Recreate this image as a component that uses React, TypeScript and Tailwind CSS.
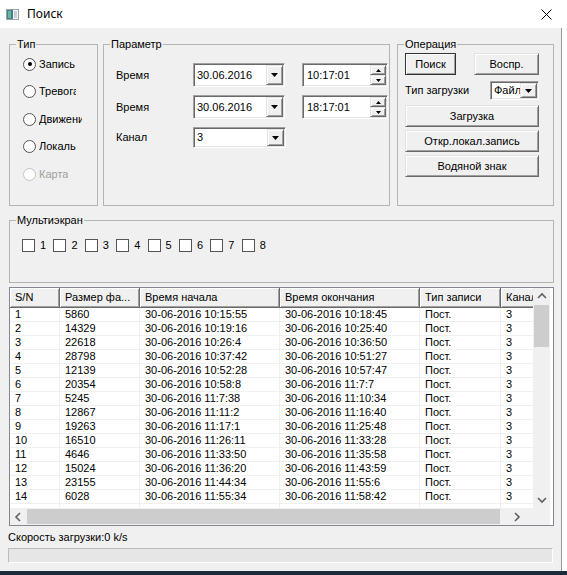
import React from 'react';

const sunken =
  'border border-[#a0a0a0] border-b-white border-r-white shadow-[inset_1px_1px_0_#696969,inset_-1px_-1px_0_#e3e3e3] bg-white';
const raised =
  'border border-[#e3e3e3] border-b-[#696969] border-r-[#696969] shadow-[inset_1px_1px_0_#fff,inset_-1px_-1px_0_#a0a0a0] bg-[#f0f0f0]';

const rows: [string, string, string, string][] = [
  ['1', '5860', '30-06-2016 10:15:55', '30-06-2016 10:18:45'],
  ['2', '14329', '30-06-2016 10:19:16', '30-06-2016 10:25:40'],
  ['3', '22618', '30-06-2016 10:26:4', '30-06-2016 10:36:50'],
  ['4', '28798', '30-06-2016 10:37:42', '30-06-2016 10:51:27'],
  ['5', '12139', '30-06-2016 10:52:28', '30-06-2016 10:57:47'],
  ['6', '20354', '30-06-2016 10:58:8', '30-06-2016 11:7:7'],
  ['7', '5245', '30-06-2016 11:7:38', '30-06-2016 11:10:34'],
  ['8', '12867', '30-06-2016 11:11:2', '30-06-2016 11:16:40'],
  ['9', '19263', '30-06-2016 11:17:1', '30-06-2016 11:25:48'],
  ['10', '16510', '30-06-2016 11:26:11', '30-06-2016 11:33:28'],
  ['11', '4646', '30-06-2016 11:33:50', '30-06-2016 11:35:58'],
  ['12', '15024', '30-06-2016 11:36:20', '30-06-2016 11:43:59'],
  ['13', '23155', '30-06-2016 11:44:34', '30-06-2016 11:55:6'],
  ['14', '6028', '30-06-2016 11:55:34', '30-06-2016 11:58:42'],
];

const colW = ['w-[50px]', 'w-[80px]', 'w-[140px]', 'w-[140px]', 'w-[81px]', 'w-[60px]'];
const headers = ['S/N', 'Размер фа...', 'Время начала', 'Время окончания', 'Тип записи', 'Канал'];

const DownArrow = () => (
  <svg width="7" height="4" viewBox="0 0 7 4">
    <path d="M0 0h7L3.5 4z" fill="#000" />
  </svg>
);

const Group = ({
  title,
  className,
  children,
}: {
  title: string;
  className: string;
  children?: React.ReactNode;
}) => (
  <fieldset className={`border border-[#b4b4b4] min-w-0 ${className}`}>
    <legend className="ml-[6px] px-[1px] leading-[13px]">{title}</legend>
    {children}
  </fieldset>
);

const Combo = ({ value, className }: { value: string; className: string }) => (
  <div className={`${sunken} p-[1px] flex ${className}`}>
    <div className="flex-1 pl-[2px] flex items-center overflow-hidden whitespace-nowrap">{value}</div>
    <div className={`${raised} w-[17px] flex items-center justify-center`}>
      <DownArrow />
    </div>
  </div>
);

const TimeBox = ({ value }: { value: string }) => (
  <div className={`${sunken} p-[1px] flex w-[86px] h-[24px]`}>
    <div className="flex-1 pl-[3px] flex items-center">{value}</div>
    <div className="w-[16px] flex flex-col">
      <div className={`${raised} flex-1 flex items-center justify-center`}>
        <svg width="5" height="3" viewBox="0 0 5 3">
          <path d="M0 3h5L2.5 0z" fill="#000" />
        </svg>
      </div>
      <div className={`${raised} flex-1 flex items-center justify-center`}>
        <svg width="5" height="3" viewBox="0 0 5 3">
          <path d="M0 0h5L2.5 3z" fill="#000" />
        </svg>
      </div>
    </div>
  </div>
);

const Btn = ({ label, className }: { label: string; className: string }) => (
  <div className={`${raised} h-[22px] flex items-center justify-center ${className}`}>{label}</div>
);

const Radio = ({
  label,
  checked,
  disabled,
  clip,
}: {
  label: string;
  checked?: boolean;
  disabled?: boolean;
  clip?: string;
}) => (
  <div className="flex items-center gap-[3px] h-[14px]">
    <div
      className={`w-[13px] h-[13px] rounded-full border bg-white flex items-center justify-center ${
        disabled ? 'border-[#c4c4c4]' : 'border-[#555]'
      }`}
    >
      {checked && <div className="w-[4px] h-[4px] rounded-full bg-black" />}
    </div>
    <span className={`whitespace-nowrap overflow-hidden ${clip ?? ''} ${disabled ? 'text-[#a0a0a0]' : ''}`}>
      {label}
    </span>
  </div>
);

const Chevron = ({ dir }: { dir: 'up' | 'down' | 'left' | 'right' }) => {
  const d = {
    up: 'M1 6l4-4 4 4',
    down: 'M1 3l4 4 4-4',
    left: 'M6 1L2 5l4 4',
    right: 'M3 1l4 4-4 4',
  }[dir];
  return (
    <svg width="10" height="10" viewBox="0 0 10 10">
      <path d={d} fill="none" stroke="#606060" strokeWidth="1.6" />
    </svg>
  );
};

export default function App() {
  return (
    <div
      className="w-[567px] h-[575px] bg-white overflow-hidden flex flex-col text-[11px] text-black"
      style={{ fontFamily: '"Liberation Sans", Arial, sans-serif' }}
    >
      {/* title bar */}
      <div className="h-[28px] flex items-center pl-[6px] pr-[15px]">
        <svg width="13" height="11" viewBox="0 0 13 11">
          <rect x="0.5" y="0.5" width="12" height="10" fill="#f4f4f4" stroke="#9aa3a8" />
          <rect x="1" y="1" width="6" height="9" fill="#3f7f8f" />
          <rect x="2" y="2" width="3" height="7" fill="#6fb59a" />
          <rect x="8" y="2" width="3" height="7" fill="#c9cfd3" />
        </svg>
        <span className="ml-[8px] text-[12px]" style={{ fontFamily: '"Noto Sans", "Open Sans", sans-serif' }}>
          Поиск
        </span>
        <svg className="ml-auto" width="11" height="11" viewBox="0 0 11 11">
          <path d="M0.5 0.5l10 10M10.5 0.5l-10 10" stroke="#000" strokeWidth="1" />
        </svg>
      </div>

      {/* body */}
      <div className="w-[562px] h-[543px] bg-[#f0f0f0] border-r border-[#9a9a9a] pl-[9px] flex flex-col">
        <div className="flex mt-[10px]">
          <Group title="Тип" className="w-[89px] h-[168px]">
            <div className="flex flex-col gap-[13.5px] pl-[13px] pt-[6px]">
              <Radio label="Запись" checked />
              <Radio label="Тревога" clip="max-w-[37px]" />
              <Radio label="Движение" clip="max-w-[43px]" />
              <Radio label="Локаль" />
              <Radio label="Карта" disabled />
            </div>
          </Group>

          <Group title="Параметр" className="ml-[5px] w-[287px] h-[168px]">
            <div className="flex flex-col gap-[8px] pl-[12px] pt-[12px]">
              <div className="flex items-center">
                <span className="w-[77px]">Время</span>
                <Combo value="30.06.2016" className="w-[92px] h-[24px]" />
                <div className="ml-[17px]">
                  <TimeBox value="10:17:01" />
                </div>
              </div>
              <div className="flex items-center">
                <span className="w-[77px]">Время</span>
                <Combo value="30.06.2016" className="w-[92px] h-[24px]" />
                <div className="ml-[17px]">
                  <TimeBox value="18:17:01" />
                </div>
              </div>
              <div className="flex items-center">
                <span className="w-[77px]">Канал</span>
                <Combo value="3" className="w-[93px] h-[21px]" />
              </div>
            </div>
          </Group>

          <Group title="Операция" className="ml-[7px] w-[157px] h-[168px]">
            <div className="flex flex-col pl-[7px] pt-[2px]">
              <div className="flex">
                <Btn label="Поиск" className="w-[51px] outline outline-1 outline-[#333] -outline-offset-1" />
                <Btn label="Воспр." className="ml-[18px] w-[65px]" />
              </div>
              <div className="flex items-center mt-[6px]">
                <span className="w-[85px]">Тип загрузки</span>
                <Combo value="Файл" className="w-[49px] h-[19px]" />
              </div>
              <Btn label="Загрузка" className="mt-[5px] w-[134px]" />
              <Btn label="Откр.локал.запись" className="mt-[3px] w-[134px]" />
              <Btn label="Водяной знак" className="mt-[3px] w-[134px]" />
            </div>
          </Group>
        </div>

        <Group title="Мультиэкран" className="mt-[8px] w-[545px] h-[69px]">
          <div className="flex pl-[12px] pt-[10px]">
            {['1', '2', '3', '4', '5', '6', '7', '8'].map((n) => (
              <div key={n} className="w-[31.4px] flex items-center gap-[5px]">
                <div className="w-[13px] h-[13px] border border-[#555] bg-white" />
                <span>{n}</span>
              </div>
            ))}
          </div>
        </Group>

        {/* list */}
        <div className="mt-[4px] w-[545px] h-[239px] border border-[#828790] bg-white flex flex-col">
          <div className="flex h-[220px]">
            <div className="w-[523px] overflow-hidden">
              <div className="w-[551px]">
                <div className="flex h-[20px]">
                  {headers.map((h, i) => (
                    <div
                      key={h}
                      className={`${colW[i]} shrink-0 pl-[5px] flex items-center bg-[#f0f0f0] border-r border-b border-[#696969] shadow-[inset_1px_1px_0_#fff,inset_-1px_-1px_0_#a0a0a0] whitespace-nowrap overflow-hidden`}
                    >
                      {h}
                    </div>
                  ))}
                </div>
                {[...rows, ['', '', '', ''] as [string, string, string, string]].map((r, ri) => (
                  <div key={ri} className="flex h-[14px]">
                    {[...r, r[0] ? 'Пост.' : '', r[0] ? '3' : ''].map((c, ci) => (
                      <div
                        key={ci}
                        className={`${colW[ci]} shrink-0 pl-[5px] border-r border-b border-[#f0f0f0] leading-[13px] whitespace-nowrap overflow-hidden`}
                      >
                        {c}
                      </div>
                    ))}
                  </div>
                ))}
              </div>
            </div>
            <div className="w-[17px] bg-[#f0f0f0] flex flex-col items-center">
              <div className="h-[17px] flex items-center justify-center">
                <Chevron dir="up" />
              </div>
              <div className="w-[15px] h-[42px] bg-[#cdcdcd]" />
              <div className="flex-1" />
              <div className="h-[17px] flex items-center justify-center">
                <Chevron dir="down" />
              </div>
            </div>
          </div>
          <div className="flex h-[17px]">
            <div className="w-[523px] bg-[#f0f0f0] flex items-center">
              <div className="w-[17px] flex justify-center">
                <Chevron dir="left" />
              </div>
              <div className="ml-[0px] w-[473px] h-[15px] bg-[#cdcdcd]" />
              <div className="flex-1 flex justify-center">
                <Chevron dir="right" />
              </div>
            </div>
            <div className="w-[17px] bg-[#f0f0f0]" />
          </div>
        </div>

        <div className="mt-[5px] -ml-[1px] leading-[13px]">Скорость загрузки:0 k/s</div>
        <div className="mt-[4px] -ml-[1px] w-[545px] h-[15px] bg-[#e6e6e6] border border-[#bcbcbc] border-b-white border-r-white" />
      </div>
      <div className="h-[4px] bg-[#1c2b3c]" />
    </div>
  );
}
